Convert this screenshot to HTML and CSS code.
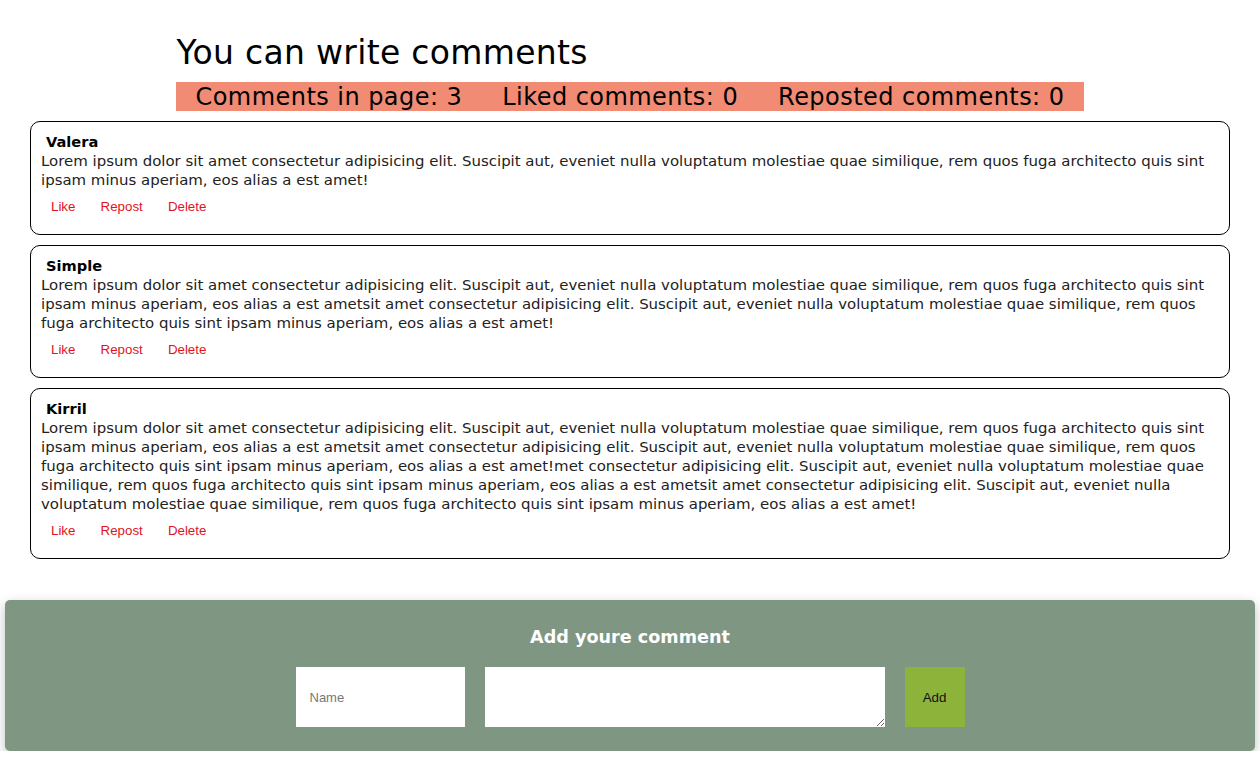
FILE: index.html
```html
<!DOCTYPE html>
<html lang="en">
<head>
<meta charset="utf-8">
<title>Comments</title>
<link rel="stylesheet" href="styles.css">
</head>
<body>
<header class="header">
  <h1 class="title">You can write comments</h1>
  <div class="stats">
    <span class="stat">Comments in page: 3</span>
    <span class="stat">Liked comments: 0</span>
    <span class="stat">Reposted comments: 0</span>
  </div>
</header>

<main class="comments">
  <article class="comment">
    <div class="comment-name">Valera</div>
    <p class="comment-text">Lorem ipsum dolor sit amet consectetur adipisicing elit. Suscipit aut, eveniet nulla voluptatum molestiae quae similique, rem quos fuga architecto quis sint ipsam minus aperiam, eos alias a est amet!</p>
    <div class="comment-actions"><button class="action">Like</button> <button class="action">Repost</button> <button class="action">Delete</button></div>
  </article>
  <article class="comment">
    <div class="comment-name">Simple</div>
    <p class="comment-text">Lorem ipsum dolor sit amet consectetur adipisicing elit. Suscipit aut, eveniet nulla voluptatum molestiae quae similique, rem quos fuga architecto quis sint ipsam minus aperiam, eos alias a est ametsit amet consectetur adipisicing elit. Suscipit aut, eveniet nulla voluptatum molestiae quae similique, rem quos fuga architecto quis sint ipsam minus aperiam, eos alias a est amet!</p>
    <div class="comment-actions"><button class="action">Like</button> <button class="action">Repost</button> <button class="action">Delete</button></div>
  </article>
  <article class="comment">
    <div class="comment-name">Kirril</div>
    <p class="comment-text">Lorem ipsum dolor sit amet consectetur adipisicing elit. Suscipit aut, eveniet nulla voluptatum molestiae quae similique, rem quos fuga architecto quis sint ipsam minus aperiam, eos alias a est ametsit amet consectetur adipisicing elit. Suscipit aut, eveniet nulla voluptatum molestiae quae similique, rem quos fuga architecto quis sint ipsam minus aperiam, eos alias a est amet!met consectetur adipisicing elit. Suscipit aut, eveniet nulla voluptatum molestiae quae similique, rem quos fuga architecto quis sint ipsam minus aperiam, eos alias a est ametsit amet consectetur adipisicing elit. Suscipit aut, eveniet nulla voluptatum molestiae quae similique, rem quos fuga architecto quis sint ipsam minus aperiam, eos alias a est amet!</p>
    <div class="comment-actions"><button class="action">Like</button> <button class="action">Repost</button> <button class="action">Delete</button></div>
  </article>
</main>

<form class="add-form">
  <h2 class="add-title">Add youre comment</h2>
  <div class="add-row">
    <input class="add-name" type="text" placeholder="Name">
    <textarea class="add-text"></textarea>
    <button class="add-btn" type="button">Add</button>
  </div>
</form>
</body>
</html>
```

FILE: styles.css
```css
* { box-sizing: border-box; }

html, body {
  margin: 0;
  padding: 0;
  background: #fff;
}

body {
  font-family: "DejaVu Sans", "Open Sans", sans-serif;
  color: #111;
}

.header {
  width: fit-content;
  margin: 0 auto;
  padding-top: 36px;
}

.title {
  margin: 0 0 0 1px;
  font-size: 33px;
  font-weight: 500;
  line-height: 34px;
  letter-spacing: 0.3px;
  color: #000;
}

.stats {
  margin-top: 12px;
  display: flex;
  gap: 40px;
  padding: 0 20px;
  height: 29px;
  align-items: center;
  background: #f28b74;
  font-size: 24px;
  font-weight: 500;
  color: #000;
  letter-spacing: 0.45px;
}

.comments {
  margin: 10px 30px 0;
  display: flex;
  flex-direction: column;
  gap: 10px;
}

.comment {
  border: 1px solid #000;
  border-radius: 10px;
  padding: 10px 10px 16px;
}

.comment-name {
  margin-left: 5px;
  font-size: 14.6px;
  font-weight: 600;
  line-height: 20px;
  color: #000;
}

.comment-text {
  margin: 0;
  font-size: 14.95px;
  line-height: 19px;
  color: #222;
}

.comment-actions {
  margin-top: 5px;
}

.action {
  font-family: Arial, "Liberation Sans", sans-serif;
  font-size: 13.33px;
  color: #e0141e;
  background: transparent;
  border: none;
  padding: 4px 10px;
}

.add-form {
  margin: 41px 5px 0;
  padding: 25px 0 24px;
  background: #7f9682;
  border-radius: 5px;
  box-shadow: 0 4px 12px rgba(0, 0, 0, 0.25);
  text-align: center;
}

.add-title {
  margin: 0 0 18px;
  font-size: 17.6px;
  font-weight: 700;
  line-height: 24px;
  color: #fff;
}

.add-row {
  display: flex;
  justify-content: center;
  gap: 20px;
}

.add-name {
  width: 169px;
  height: 60px;
  border: none;
  padding: 0 14px;
  font-family: Arial, "Liberation Sans", sans-serif;
  font-size: 13px;
  outline: none;
}

.add-name::placeholder { color: #777; }

.add-text {
  width: 400px;
  height: 60px;
  border: none;
  resize: vertical;
  outline: none;
}

.add-btn {
  width: 60px;
  height: 60px;
  border: none;
  background: #8db33a;
  font-family: Arial, "Liberation Sans", sans-serif;
  font-size: 13.33px;
  color: #111;
}
```
